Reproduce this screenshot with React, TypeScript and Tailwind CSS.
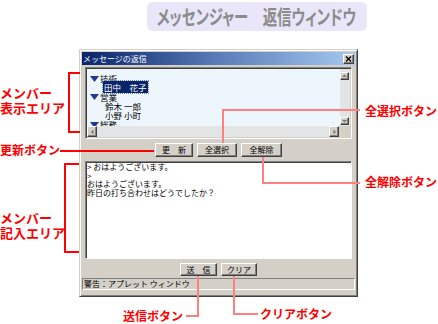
import React from 'react';

const jp = "font-['Noto_Sans_CJK_JP',sans-serif]";
const raised =
  'bg-[#d4d0c8] border border-t-white border-l-white border-r-[#404040] border-b-[#404040] shadow-[inset_-1px_-1px_0_#808080]';
const sunken =
  'border border-t-[#808080] border-l-[#808080] border-r-white border-b-white shadow-[inset_1px_1px_0_#404040]';

const Tri = () => (
  <svg width="9" height="6" viewBox="0 0 9 6" className="shrink-0">
    <path d="M0 0H9L4.5 6Z" fill="#24388c" />
  </svg>
);

const Arrow = ({ dir }: { dir: 'up' | 'down' | 'left' | 'right' }) => {
  const d = {
    up: 'M1 4H6L3.5 1.5Z',
    down: 'M1 2H6L3.5 4.5Z',
    left: 'M4.5 0.5V5.5L2 3Z',
    right: 'M2.5 0.5V5.5L5 3Z',
  }[dir];
  return (
    <svg width="7" height="6" viewBox="0 0 7 6">
      <path d={d} fill="#7a7a7a" />
    </svg>
  );
};

const SBtn = ({ dir, cls }: { dir: 'up' | 'down' | 'left' | 'right'; cls: string }) => (
  <div className={`${raised} ${cls} flex items-center justify-center`}>
    <Arrow dir={dir} />
  </div>
);

const Btn = ({ label, w }: { label: string; w: string }) => (
  <div className={`${raised} ${w} h-full flex items-center justify-center text-[8px] text-black`}>{label}</div>
);

const Label = ({ children, cls }: { children: React.ReactNode; cls: string }) => (
  <div className={`absolute ${cls} font-bold text-[#ff0000] whitespace-nowrap`}>
    {children}
  </div>
);

export default function App() {
  return (
    <div className={`${jp} relative w-[438px] h-[324px] bg-white overflow-hidden`}>
      {/* banner */}
      <div className="ml-[147px] mt-[2px] w-[220px] h-[29px] rounded-[6px] bg-[#e8e6f8] flex items-center justify-center">
        <span className="inline-block whitespace-nowrap text-[20px] leading-[22px] font-bold text-[#8c8c8c] [font-feature-settings:'palt'] scale-x-[0.72]">
          メッセンジャー　返信ウィンドウ
        </span>
      </div>

      {/* window */}
      <div className="ml-[79px] mt-[18px] w-[279px] h-[248px] bg-[#d4d0c8] border border-t-[#d4d0c8] border-l-[#d4d0c8] border-r-[#404040] border-b-[#404040] shadow-[inset_1px_1px_0_#fff,inset_-1px_-1px_0_#808080] p-[2px] flex flex-col">
        <div className="h-[13px] bg-gradient-to-r from-[#0a246a] via-[#5a7cb8] to-[#a6caf0] flex items-center justify-between pl-[1px] pr-[1px]">
          <span className="text-[8px] leading-none text-white">メッセージの返信</span>
          <div className={`${raised} w-[11px] h-[10px] flex items-center justify-center`}>
            <svg width="7" height="6" viewBox="0 0 7 6">
              <path d="M1 0.5L6 5.5M6 0.5L1 5.5" stroke="#000" strokeWidth="1.4" />
            </svg>
          </div>
        </div>

        <div className="px-[3px] flex flex-col">
          {/* member list */}
          <div className={`${sunken} mt-[2px] h-[72px] p-[1px] flex flex-col`}>
            <div className="flex flex-1 min-h-0">
              <div className="flex-1 bg-[#eef6fd] pt-[5px] pl-[3px] overflow-hidden text-[8.5px] leading-[9.3px] text-black">
                <div className="flex items-center gap-[1px]"><Tri />技術</div>
                <div className="pl-[13px]"><span className="bg-[#0a246a] text-white px-[1px] outline outline-1 outline-dotted outline-[#6a80c0]">田中　花子</span></div>
                <div className="flex items-center gap-[1px]"><Tri />営業</div>
                <div className="pl-[15px]">鈴木 一郎</div>
                <div className="pl-[15px]">小野 小町</div>
                <div className="flex items-center gap-[1px]"><Tri />総務</div>
              </div>
              <div className="w-[10px] bg-[#e2e4e6] flex flex-col justify-between pt-[3px] pb-[1px]">
                <SBtn dir="up" cls="w-[9px] h-[8px]" />
                <SBtn dir="down" cls="w-[9px] h-[8px]" />
              </div>
            </div>
            <div className="h-[11px] flex">
              <SBtn dir="left" cls="w-[10px] h-[11px]" />
              <div className="flex-1 bg-[#e2e4e6]" />
              <SBtn dir="right" cls="w-[10px] h-[11px]" />
              <div className="w-[11px] bg-[#d4d0c8]" />
            </div>
          </div>

          {/* buttons */}
          <div className="mt-[4px] h-[14px] flex justify-center gap-[4px]">
            <Btn label="更　新" w="w-[38px]" />
            <Btn label="全選択" w="w-[40px]" />
            <Btn label="全解除" w="w-[41px]" />
          </div>

          {/* input area */}
          <div className={`${sunken} mt-[4px] h-[98px] bg-white pl-[1px] pt-[1px] text-[8px] leading-[8.7px] text-black`}>
            <div>&gt; おはようございます。</div>
            <div>&gt;</div>
            <div>おはようございます。</div>
            <div>昨日の打ち合わせはどうでしたか？</div>
          </div>

          <div className="mt-[4px] h-[13px] flex justify-center gap-[4px]">
            <Btn label="送　信" w="w-[37px]" />
            <Btn label="クリア" w="w-[36px]" />
          </div>
        </div>

        <div className="mt-[2px] h-[12px] border border-t-[#808080] border-l-[#808080] border-r-white border-b-white flex items-center pl-[1px] text-[8px] leading-none text-black">
          警告：アプレット ウィンドウ
        </div>
      </div>

      {/* annotations */}
      <Label cls="left-0 top-[85px] text-[13px] leading-[15px]">メンバー<br />表示エリア</Label>
      <div className="absolute left-[68px] top-[72px] w-[12px] h-[61px] border-2 border-r-0 border-[#ff0000]" />

      <Label cls="left-0 top-[143px] text-[12px] leading-[14px]">更新ボタン</Label>
      <div className="absolute left-[60px] top-[150px] w-[94px] h-[2px] bg-[#ff0000]" />

      <Label cls="left-0 top-[210px] text-[13px] leading-[15px]">メンバー<br />記入エリア</Label>
      <div className="absolute left-[64px] top-[163px] w-[15px] h-[90px] border-2 border-r-0 border-[#ff0000]" />

      <Label cls="left-[365px] top-[104px] text-[12px] leading-[14px]">全選択ボタン</Label>
      <div className="absolute left-[222px] top-[109px] w-[138px] h-[2px] bg-[#ff8080]" />
      <div className="absolute left-[222px] top-[109px] w-[2px] h-[34px] bg-[#ff8080]" />

      <Label cls="left-[365px] top-[175px] text-[12px] leading-[14px]">全解除ボタン</Label>
      <div className="absolute left-[262px] top-[157px] w-[2px] h-[27px] bg-[#ff8080]" />
      <div className="absolute left-[262px] top-[182px] w-[98px] h-[2px] bg-[#ff8080]" />

      <Label cls="left-[123px] top-[309px] text-[12px] leading-[14px]">送信ボタン</Label>
      <div className="absolute left-[197px] top-[276px] w-[2px] h-[41px] bg-[#ff8080]" />
      <div className="absolute left-[186px] top-[315px] w-[13px] h-[2px] bg-[#ff8080]" />

      <Label cls="left-[260px] top-[307px] text-[12px] leading-[14px]">クリアボタン</Label>
      <div className="absolute left-[233px] top-[276px] w-[2px] h-[39px] bg-[#ff8080]" />
      <div className="absolute left-[233px] top-[313px] w-[25px] h-[2px] bg-[#ff8080]" />
    </div>
  );
}
